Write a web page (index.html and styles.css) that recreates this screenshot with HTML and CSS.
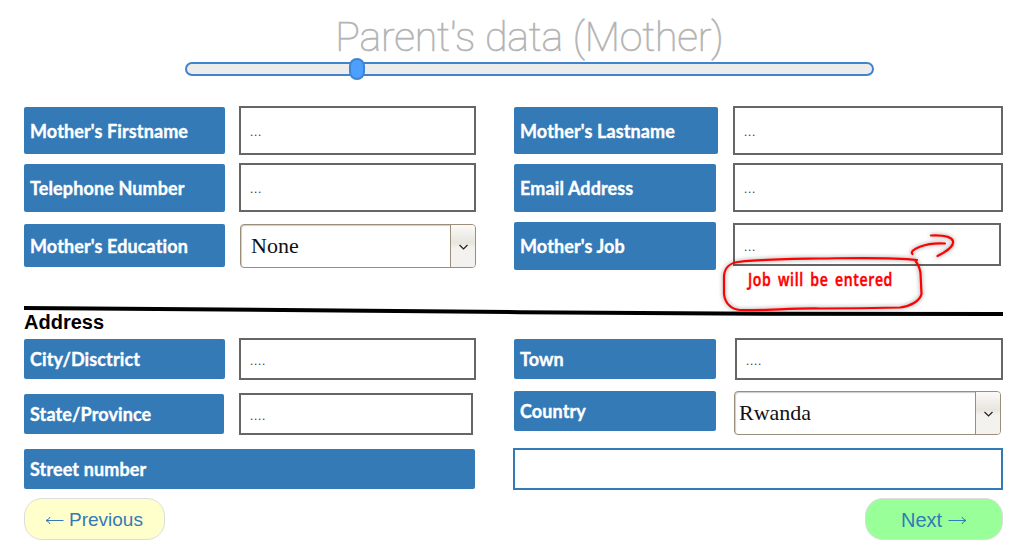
FILE: index.html
```html
<!DOCTYPE html>
<html lang="en">
<head>
<meta charset="utf-8">
<title>Parent's data (Mother)</title>
<link rel="stylesheet" href="styles.css">
</head>
<body>
<main class="page">
  <header class="header">
    <h1 class="title">Parent's data (Mother)</h1>
    <div class="track"><span class="thumb"></span></div>
  </header>

  <section class="rows">
    <div class="row row-name">
      <label class="label">Mother's Firstname</label>
      <div class="field">...</div>
      <label class="label label-wide">Mother's Lastname</label>
      <div class="field">...</div>
    </div>
    <div class="row row-contact">
      <label class="label">Telephone Number</label>
      <div class="field">...</div>
      <label class="label">Email Address</label>
      <div class="field">...</div>
    </div>
    <div class="row row-job">
      <label class="label label-education">Mother's Education</label>
      <div class="select select-education"><span class="value">None</span><span class="arrow"><svg width="11" height="7" viewBox="0 0 11 7"><path d="M1.5 1 5.5 5 9.5 1"/></svg></span></div>
      <label class="label">Mother's Job</label>
      <div class="field field-job">...
        <svg class="note" width="250" height="90" viewBox="715 226 250 90">
          <g class="ink">
            <path d="M917 260 C890 257 860 258 820 258.5 C790 259 765 259 738 262 C729 263 724.5 269 724 276 L724 294 C725 304 732 309.5 740 310 C765 311 790 308 820 308.5 C850 308.5 880 308 900 307.5 C910 306.5 920 301 921.5 294 L920.5 273 C919.5 267 918 264 915.5 261"/>
            <path d="M912.5 254 C908 250 926 242 945 243.5"/>
            <path d="M931 235.5 C942 235 951 236 953 241 C954 246 946 252 937.5 256"/>
          </g>
          <text class="note-text" x="748" y="285.5" textLength="145" lengthAdjust="spacingAndGlyphs">Job will be entered</text>
        </svg>
      </div>
    </div>
  </section>

  <svg class="divider" width="979" height="10" viewBox="24 306 979 10"><path d="M24 308 310 310.3 520 312.2 720 313.6 1003 314"/></svg>
  <h2 class="subtitle">Address</h2>

  <section class="rows">
    <div class="row row-city">
      <label class="label">City/Disctrict</label>
      <div class="field">....</div>
      <label class="label">Town</label>
      <div class="field field-town">....</div>
    </div>
    <div class="row row-state">
      <label class="label label-state">State/Province</label>
      <div class="field field-state">....</div>
      <label class="label label-country">Country</label>
      <div class="select select-country"><span class="value">Rwanda</span><span class="arrow"><svg width="11" height="7" viewBox="0 0 11 7"><path d="M1.5 1 5.5 5 9.5 1"/></svg></span></div>
    </div>
    <div class="row-street">
      <label class="label">Street number</label>
      <div class="field field-street"></div>
    </div>
  </section>

  <nav class="actions">
    <a class="button previous"><svg width="19" height="12" viewBox="0 0 19 12"><path d="M18.5 6.5H1M5 3Q4 5.5 1 6.5Q4 7.5 5 10"/></svg><span class="prev-text">Previous</span></a>
    <a class="button next"><span class="next-text">Next</span><svg width="19" height="12" viewBox="0 0 19 12"><path d="M.5 6.5H18M14 3Q15 5.5 18 6.5Q15 7.5 14 10"/></svg></a>
  </nav>
</main>
</body>
</html>
```
FILE: styles.css
```css
* { box-sizing: border-box; }
body { margin: 0; background: #fff; overflow: hidden; }
.page { width: 1028px; height: 545px; padding: 0 25px 0 24px; }

.header { height: 106px; padding: 13px 0 0 161px; }
.title {
  margin: 0; width: 689px; height: 49px; text-align: center;
  font: 100 41px/49px Roboto, sans-serif; color: #b4b4b4; white-space: nowrap;
  letter-spacing: -.14px; -webkit-text-stroke: .7px #b4b4b4;
}
.track {
  position: relative; width: 689px; height: 14px;
  border: 2px solid #4183cc; border-radius: 8px; background: #ececec;
}
.thumb {
  position: absolute; left: 162px; top: -6px; width: 16px; height: 22px;
  border: 2px solid #3f84cf; border-radius: 8px; background: #4da0ff;
}

.row {
  display: grid; grid-template-columns: 215px 275px 219px 270px;
  align-items: start;
}
.row-name { height: 57px; }
.row-contact { height: 59px; }
.row-job { height: 84px; }
.row-city { height: 53px; }
.row-state { height: 57px; }
.row-street { display: grid; grid-template-columns: 489px 490px; height: 50px; align-items: start; }

.label {
  display: flex; align-items: center; width: 201px; height: 40px; margin-top: 1px;
  padding-left: 6px; border-radius: 2px; background: #337ab7; color: #fff;
  font: 700 18px/24px Lato, sans-serif; white-space: nowrap;
  letter-spacing: .12px; font-variant-ligatures: none; -webkit-text-stroke: .35px #fff;
}
.label:nth-child(3) { width: 202px; }
.row-name .label { height: 47px; }
.row-contact .label { height: 48px; }
.row-job .label { height: 48px; margin-top: 0; }
.row-name .label-wide { width: 204px; }
.row-job .label-education { height: 43px; margin-top: 2px; }
.row-state .label-state { width: 200px; margin-top: 3px; }
.row-state .label-country { margin-top: 0; }
.row-street .label { width: 451px; }

.field {
  width: 237px; height: 42px; padding: 13px 0 0 9px; border: 2px solid #666;
  background: #fff; color: #444; font: 13px/16px "Liberation Serif", serif;
  letter-spacing: .75px;
}
.field:nth-child(4) { width: 270px; }
.row-name .field, .row-contact .field { height: 49px; padding-top: 16px; }
.row-job .field-job { position: relative; width: 268px; height: 43px; margin-top: 1px; padding-top: 14px; }
.row-city .field-town { width: 268px; margin-left: 2px; }
.row-state .field-state { width: 234px; margin-top: 2px; }
.row-street .field-street { width: 490px; border-color: #337ab7; }

.select {
  display: flex; height: 44px; border: 1px solid #9b8e7b; border-radius: 4px;
  background: #fff; box-shadow: inset 1px 1px 1px #ccc; overflow: hidden;
  font: 22px/42px "Liberation Serif", serif; color: #111;
}
.value { flex: 1; }
.select-education { width: 236px; margin: 2px 0 0 1px; padding-left: 10px; }
.select-country { width: 267px; margin-left: 1px; padding-left: 4px; }
.arrow {
  display: flex; align-items: center; justify-content: center; width: 25px; padding-top: 2px;
  border-left: 1px solid #9b8e7b;
  background: linear-gradient(#fbfaf8, #e8e5df 42%, #f4f2ee 55%, #f4f2ee);
}
.arrow path { fill: none; stroke: #222; stroke-width: 1.2; }

.note { position: absolute; left: -20px; top: 1px; pointer-events: none; overflow: visible; }
.ink { fill: none; stroke: #f00; stroke-width: 2.2; stroke-linecap: round; stroke-linejoin: round; filter: drop-shadow(0 0 2px rgba(0, 0, 0, .45)); }
.note-text {
  font: 600 18px "Open Sans", sans-serif; fill: #f00; stroke: #f00; stroke-width: .5;
  letter-spacing: .8px; word-spacing: 3px;
}

.divider { display: block; height: 10px; }
.divider path { fill: none; stroke: #000; stroke-width: 4; }
.subtitle { margin: 0; height: 22px; font: 700 20px/12px "Liberation Sans", Arial, sans-serif; color: #000; }

.actions { display: flex; justify-content: space-between; }
.button {
  display: flex; align-items: center; height: 42px; padding-top: 2px; border: 1px solid #dcdcdc;
  border-radius: 18px; color: #337ab7; font: 20px/24px "Liberation Sans", Arial, sans-serif;
}
.button path { fill: none; stroke: #337ab7; stroke-width: 1; }
.previous { width: 141px; padding-left: 20px; gap: 5px; background: #ffffcb; font-size: 19px; }
.next { width: 138px; padding-left: 35px; gap: 6px; background: #9f9; }
```
